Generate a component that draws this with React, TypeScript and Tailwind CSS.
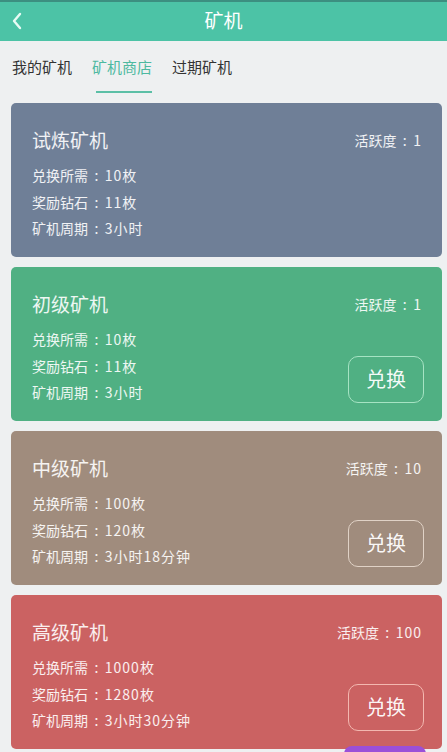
import React from 'react'

const font = { fontFamily: '"Noto Sans CJK SC", "Noto Sans", sans-serif' }

type Miner = {
  name: string
  active: string
  cost: string
  reward: string
  period: string
  bg: string
  border: string
  canBuy: boolean
}

const miners: Miner[] = [
  { name: '试炼矿机', active: '1', cost: '10枚', reward: '11枚', period: '3小时', bg: 'bg-[#6f7f97]', border: 'border-[#a9b3c3]', canBuy: false },
  { name: '初级矿机', active: '1', cost: '10枚', reward: '11枚', period: '3小时', bg: 'bg-[#50b083]', border: 'border-[#a6e3c3]', canBuy: true },
  { name: '中级矿机', active: '10', cost: '100枚', reward: '120枚', period: '3小时18分钟', bg: 'bg-[#a08c7d]', border: 'border-[#e0d2c6]', canBuy: true },
  { name: '高级矿机', active: '100', cost: '1000枚', reward: '1280枚', period: '3小时30分钟', bg: 'bg-[#cb6262]', border: 'border-[#f3b8b0]', canBuy: true },
]

// label : value, colon centred and digits a bit wider like the screenshot
function Row({ label, value }: { label: string; value: string }) {
  return (
    <div>
      {label}
      <span className="inline-block w-[1.2em] text-center">:</span>
      <span className="tracking-[1px]">{value}</span>
    </div>
  )
}

function MinerCard({ m }: { m: Miner }) {
  return (
    <div className={`${m.bg} rounded-[5px] h-[154px] shrink-0 pl-[21px] pr-[18px] pt-[25px] text-white/90`}>
      <div className="flex items-center justify-between h-[24px]">
        <span className="text-[19px] leading-[24px]">{m.name}</span>
        <span className="text-[14px] mr-[2px]">
          <Row label="活跃度" value={m.active} />
        </span>
      </div>
      <div className="flex items-end justify-between mt-[10px]">
        <div className="text-[14px] leading-[26.5px]">
          <Row label="兑换所需" value={m.cost} />
          <Row label="奖励钻石" value={m.reward} />
          <Row label="矿机周期" value={m.period} />
        </div>
        {m.canBuy && (
          <button className={`w-[76px] h-[47px] mb-[3px] rounded-[10px] border-[1.5px] ${m.border} text-[20px] text-white/95`}>
            兑换
          </button>
        )}
      </div>
    </div>
  )
}

export default function App() {
  return (
    <div className="relative h-[752px] w-[447px] overflow-hidden bg-[#eef0f1]" style={font}>
      <header className="h-[41px] border-t-2 border-[#3c8f80] bg-[#4cc3a6] relative flex items-center justify-center">
        <svg className="absolute left-[11px] top-[10px]" width="12" height="18" viewBox="0 0 12 18">
          <path d="M9 2 L3 9 L9 16" stroke="#e8fbf5" strokeWidth="2.4" fill="none" strokeLinecap="round" strokeLinejoin="round" />
        </svg>
        <span className="text-white text-[19px] -mt-[2px]">矿机</span>
      </header>

      <nav className="flex gap-[20px] pl-[12px] pt-[15px] h-[62px] text-[15px] text-[#333]">
        <span className="leading-[22px]">我的矿机</span>
        <span className="relative leading-[22px] text-[#4db9a0]">
          矿机商店
          <span className="absolute left-[4px] right-0 top-[35px] h-[2px] bg-[#5bbfa6]" />
        </span>
        <span className="leading-[22px]">过期矿机</span>
      </nav>

      <main className="flex flex-col gap-[10px] px-[11px] pr-[5px]">
        {miners.map((m) => (
          <MinerCard key={m.name} m={m} />
        ))}
      </main>

      <div className="absolute bottom-[-6px] left-[344px] w-[82px] h-[12px] rounded-t-[8px] bg-[#9b4fd8]" />
    </div>
  )
}
